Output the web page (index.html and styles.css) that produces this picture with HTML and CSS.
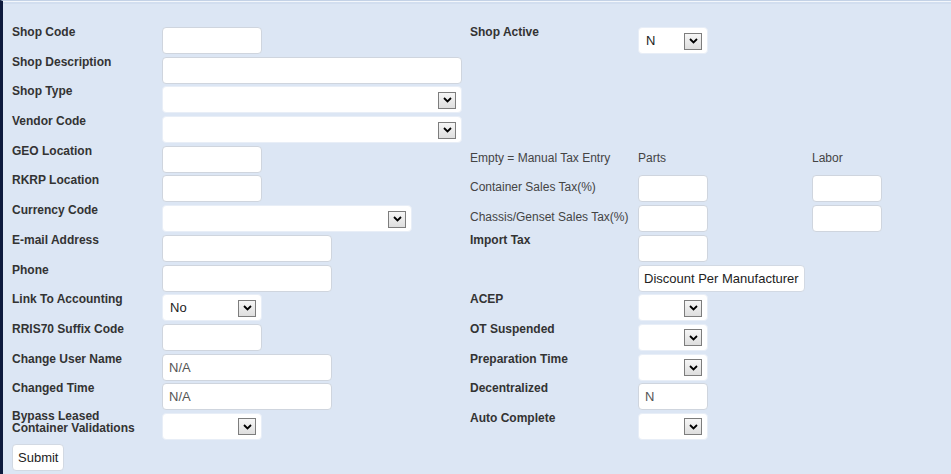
FILE: index.html
```html
<!DOCTYPE html>
<html>
<head>
<meta charset="utf-8">
<link rel="stylesheet" href="styles.css">
</head>
<body>
<div class="page">
  <div class="form">
    <div class="lbl">Shop Code</div>
    <div class="fld"><div class="inp w100"></div></div>
    <div class="lbl">Shop Active</div>
    <div class="fld"><div class="sel w70"><span class="val">N</span><span class="arrow"><svg width="9" height="6" viewBox="0 0 9 6"><path d="M1 1L4.5 4.5L8 1" fill="none" stroke="#000" stroke-width="1.8"/></svg></span></div></div>
    <div></div>

    <div class="lbl">Shop Description</div>
    <div class="fld"><div class="inp w300"></div></div>
    <div></div><div></div><div></div>

    <div class="lbl">Shop Type</div>
    <div class="fld"><div class="sel w300"><span class="val"></span><span class="arrow"><svg width="9" height="6" viewBox="0 0 9 6"><path d="M1 1L4.5 4.5L8 1" fill="none" stroke="#000" stroke-width="1.8"/></svg></span></div></div>
    <div></div><div></div><div></div>

    <div class="lbl">Vendor Code</div>
    <div class="fld"><div class="sel w300"><span class="val"></span><span class="arrow"><svg width="9" height="6" viewBox="0 0 9 6"><path d="M1 1L4.5 4.5L8 1" fill="none" stroke="#000" stroke-width="1.8"/></svg></span></div></div>
    <div></div><div></div><div></div>

    <div class="lbl">GEO Location</div>
    <div class="fld"><div class="inp w100"></div></div>
    <div class="txt">Empty = Manual Tax Entry</div>
    <div class="txt">Parts</div>
    <div class="txt">Labor</div>

    <div class="lbl">RKRP Location</div>
    <div class="fld"><div class="inp w100"></div></div>
    <div class="txt">Container Sales Tax(%)</div>
    <div class="fld"><div class="inp w70"></div></div>
    <div class="fld"><div class="inp w70"></div></div>

    <div class="lbl">Currency Code</div>
    <div class="fld"><div class="sel w250"><span class="val"></span><span class="arrow"><svg width="9" height="6" viewBox="0 0 9 6"><path d="M1 1L4.5 4.5L8 1" fill="none" stroke="#000" stroke-width="1.8"/></svg></span></div></div>
    <div class="txt">Chassis/Genset Sales Tax(%)</div>
    <div class="fld"><div class="inp w70"></div></div>
    <div class="fld"><div class="inp w70"></div></div>

    <div class="lbl">E-mail Address</div>
    <div class="fld"><div class="inp w170"></div></div>
    <div class="lbl">Import Tax</div>
    <div class="fld"><div class="inp w70"></div></div>
    <div></div>

    <div class="lbl">Phone</div>
    <div class="fld"><div class="inp w170"></div></div>
    <div></div>
    <div class="fld"><button class="btn">Discount Per Manufacturer</button></div>
    <div></div>

    <div class="lbl">Link To Accounting</div>
    <div class="fld"><div class="sel w100"><span class="val">No</span><span class="arrow"><svg width="9" height="6" viewBox="0 0 9 6"><path d="M1 1L4.5 4.5L8 1" fill="none" stroke="#000" stroke-width="1.8"/></svg></span></div></div>
    <div class="lbl">ACEP</div>
    <div class="fld"><div class="sel w70"><span class="val"></span><span class="arrow"><svg width="9" height="6" viewBox="0 0 9 6"><path d="M1 1L4.5 4.5L8 1" fill="none" stroke="#000" stroke-width="1.8"/></svg></span></div></div>
    <div></div>

    <div class="lbl">RRIS70 Suffix Code</div>
    <div class="fld"><div class="inp w100"></div></div>
    <div class="lbl">OT Suspended</div>
    <div class="fld"><div class="sel w70"><span class="val"></span><span class="arrow"><svg width="9" height="6" viewBox="0 0 9 6"><path d="M1 1L4.5 4.5L8 1" fill="none" stroke="#000" stroke-width="1.8"/></svg></span></div></div>
    <div></div>

    <div class="lbl">Change User Name</div>
    <div class="fld"><div class="inp w170 dim">N/A</div></div>
    <div class="lbl">Preparation Time</div>
    <div class="fld"><div class="sel w70"><span class="val"></span><span class="arrow"><svg width="9" height="6" viewBox="0 0 9 6"><path d="M1 1L4.5 4.5L8 1" fill="none" stroke="#000" stroke-width="1.8"/></svg></span></div></div>
    <div></div>

    <div class="lbl">Changed Time</div>
    <div class="fld"><div class="inp w170 dim">N/A</div></div>
    <div class="lbl">Decentralized</div>
    <div class="fld"><div class="inp w70 dim">N</div></div>
    <div></div>

    <div class="lbl two">Bypass Leased<br>Container Validations</div>
    <div class="fld"><div class="sel w100"><span class="val"></span><span class="arrow"><svg width="9" height="6" viewBox="0 0 9 6"><path d="M1 1L4.5 4.5L8 1" fill="none" stroke="#000" stroke-width="1.8"/></svg></span></div></div>
    <div class="lbl">Auto Complete</div>
    <div class="fld"><div class="sel w70"><span class="val"></span><span class="arrow"><svg width="9" height="6" viewBox="0 0 9 6"><path d="M1 1L4.5 4.5L8 1" fill="none" stroke="#000" stroke-width="1.8"/></svg></span></div></div>
    <div></div>
  </div>
  <div class="actions"><button class="btn">Submit</button></div>
</div>
</body>
</html>
```

FILE: styles.css
```css
html, body {
  margin: 0;
  padding: 0;
  height: 100%;
}
body {
  background: #dce6f4;
  font-family: "Liberation Sans", Arial, sans-serif;
  color: #333;
}
.page {
  min-height: 100%;
  box-sizing: border-box;
  border-left: 3px solid #0d1a3d;
  border-top: 1px solid #c4d2e6;
  box-shadow: inset 0 1px 0 #f3f7fc, inset 0 3px 0 #d2deef;
  padding: 22px 0 0 9px;
}
.form {
  display: grid;
  grid-template-columns: 150px 308px 168px 174px 1fr;
  grid-auto-rows: 29.7px;
}
.lbl {
  font-size: 12px;
  font-weight: bold;
  line-height: 12px;
  padding-top: 3px;
  color: #333;
}
.lbl.two {
  line-height: 12px;
  padding-top: 1px;
}
.txt {
  font-size: 12px;
  line-height: 14px;
  align-self: center;
  color: #444;
  padding-top: 2px;
}
.fld {
  padding-top: 4px;
}
.inp, .sel {
  box-sizing: border-box;
  height: 27px;
  background: #fff;
  border-radius: 4px;
  font-size: 13px;
}
.inp {
  border: 1px solid #cfd5de;
  padding: 5px 6px 0;
  line-height: 16px;
}
.inp.dim {
  color: #555;
}
.sel {
  border: 1px solid #e8eef7;
  display: flex;
  align-items: center;
  padding: 0 5px 0 7px;
  color: #222;
}
.sel .val {
  flex: 1;
}
.arrow {
  box-sizing: border-box;
  width: 18px;
  height: 17px;
  border: 1px solid #7d7d7d;
  background: linear-gradient(#f6f6f6, #dedede);
  display: flex;
  align-items: center;
  justify-content: center;
  margin-top: 1px;
}
.w70 { width: 70px; }
.w100 { width: 100px; }
.w170 { width: 170px; }
.w250 { width: 250px; }
.w300 { width: 300px; }
.btn {
  box-sizing: border-box;
  height: 27px;
  font-family: "Liberation Sans", Arial, sans-serif;
  font-size: 13px;
  color: #222;
  background: #fff;
  border: 1px solid #d2d9e3;
  border-radius: 4px;
  padding: 0 5px;
  margin: 0;
}
.actions {
  padding: 5px 0 0 0;
}
```
